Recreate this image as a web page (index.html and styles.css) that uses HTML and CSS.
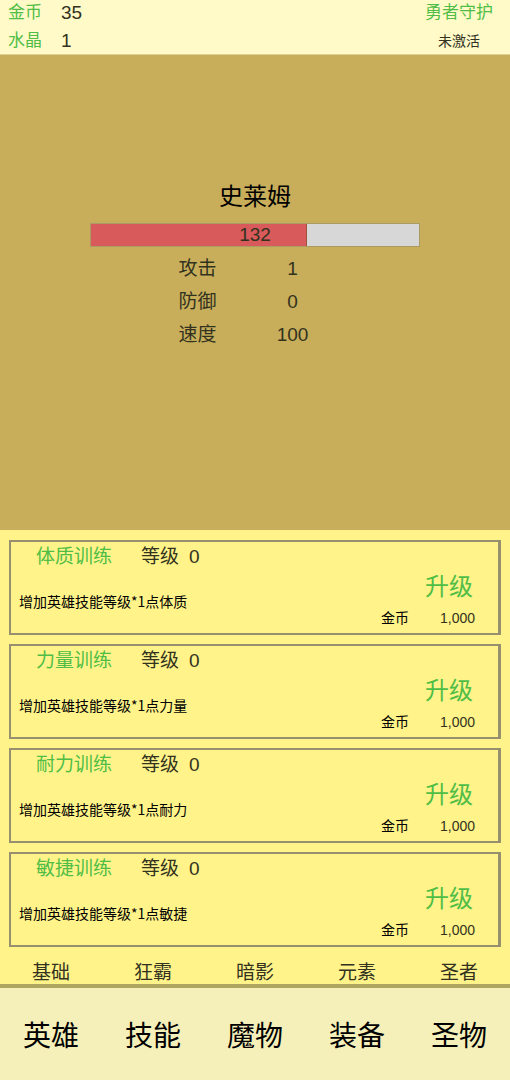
FILE: index.html
```html
<!DOCTYPE html>
<html lang="zh-CN">
<head>
    <meta charset="UTF-8">
    <meta name="viewport" content="width=device-width, initial-scale=1.0">
    <title>勇者守护</title>
    <link rel="stylesheet" href="styles.css">
</head>
<body>

    <!-- 顶部资源 -->
    <header class="topbar">
        <div class="resources">
            <div class="resource"><span class="green">金币</span><span class="number">35</span></div>
            <div class="resource"><span class="green">水晶</span><span class="number">1</span></div>
        </div>
        <div class="guard">
            <div class="green">勇者守护</div>
            <div class="guard-state">未激活</div>
        </div>
    </header>

    <!-- 战斗区域 -->
    <main class="battle">
        <h1>史莱姆</h1>
        <div class="hp">
            <div class="hp-fill" style="width: 66%"></div>
            <span class="hp-text">132</span>
        </div>
        <dl class="stats">
            <dt>攻击</dt><dd>1</dd>
            <dt>防御</dt><dd>0</dd>
            <dt>速度</dt><dd>100</dd>
        </dl>
    </main>

    <!-- 技能列表 -->
    <section class="panel">
        <div class="skill">
            <div class="skill-info">
                <div class="skill-title"><span class="green">体质训练</span><span class="level">等级</span><span>0</span></div>
                <p>增加英雄技能等级*1点体质</p>
            </div>
            <div class="skill-buy">
                <button type="button">升级</button>
                <div class="cost"><span class="cost-name">金币</span><span>1,000</span></div>
            </div>
        </div>
        <div class="skill">
            <div class="skill-info">
                <div class="skill-title"><span class="green">力量训练</span><span class="level">等级</span><span>0</span></div>
                <p>增加英雄技能等级*1点力量</p>
            </div>
            <div class="skill-buy">
                <button type="button">升级</button>
                <div class="cost"><span class="cost-name">金币</span><span>1,000</span></div>
            </div>
        </div>
        <div class="skill">
            <div class="skill-info">
                <div class="skill-title"><span class="green">耐力训练</span><span class="level">等级</span><span>0</span></div>
                <p>增加英雄技能等级*1点耐力</p>
            </div>
            <div class="skill-buy">
                <button type="button">升级</button>
                <div class="cost"><span class="cost-name">金币</span><span>1,000</span></div>
            </div>
        </div>
        <div class="skill">
            <div class="skill-info">
                <div class="skill-title"><span class="green">敏捷训练</span><span class="level">等级</span><span>0</span></div>
                <p>增加英雄技能等级*1点敏捷</p>
            </div>
            <div class="skill-buy">
                <button type="button">升级</button>
                <div class="cost"><span class="cost-name">金币</span><span>1,000</span></div>
            </div>
        </div>
    </section>

    <!-- 技能分类 -->
    <div class="tabs">
        <button type="button">基础</button>
        <button type="button">狂霸</button>
        <button type="button">暗影</button>
        <button type="button">元素</button>
        <button type="button">圣者</button>
    </div>

    <!-- 底部菜单 -->
    <nav class="menu">
        <button type="button">英雄</button>
        <button type="button">技能</button>
        <button type="button">魔物</button>
        <button type="button">装备</button>
        <button type="button">圣物</button>
    </nav>

</body>
</html>
```
FILE: styles.css
```css
* {
    box-sizing: border-box;
}
body {
    display: flex;
    flex-direction: column;
    min-height: 100vh;
    margin: 0;
    background-color: #fff389;
    color: #32321e;
    font-family: "Liberation Sans", "Noto Sans CJK SC", sans-serif;
    font-size: 19px;
}
button {
    padding: 0;
    border: none;
    background: none;
    color: inherit;
    font-family: inherit;
    cursor: pointer;
}
.green {
    color: #50be46;
}
.topbar {
    display: flex;
    align-items: center;
    justify-content: space-between;
    height: 55px;
    padding: 0 17px 0 8px;
    background-color: #fffac8;
    border-bottom: 1px solid #dcd296;
    line-height: 28px;
}
.resource {
    display: flex;
}
.resource .green,
.guard .green {
    font-size: 17px;
}
.number {
    margin-left: 19px;
}
.guard {
    text-align: center;
}
.guard-state {
    font-size: 14px;
}
.battle {
    flex: 1;
    display: flex;
    flex-direction: column;
    align-items: center;
    padding: 124px 20px;
    background-color: #c8ae5a;
}
.battle h1 {
    margin: 0 0 8px;
    color: #000;
    font-size: 24px;
    font-weight: normal;
    line-height: 36px;
}
.hp {
    position: relative;
    width: 100%;
    max-width: 330px;
    height: 24px;
    background-color: #d7d7d7;
    border: 1px solid #aa9b64;
}
.hp-fill {
    height: 100%;
    background-color: #d85a5a;
    border-right: 1px solid #a0503c;
}
.hp-text {
    position: absolute;
    inset: 0;
    text-align: center;
    line-height: 22px;
}
.stats {
    display: grid;
    grid-template-columns: 95px 95px;
    width: 100%;
    max-width: 330px;
    margin: 5px 0 0;
    padding-left: 60px;
    text-align: center;
    line-height: 33px;
}
.stats dd {
    margin: 0;
}
.panel {
    display: flex;
    flex-direction: column;
    gap: 9px;
    padding: 10px 9px 9px;
}
.skill {
    display: flex;
    justify-content: space-between;
    border: 2px solid #96906e;
    border-width: 2px 3px 2px 2px;
    line-height: 30px;
}
.skill-title {
    display: flex;
    padding-left: 25px;
}
.level {
    margin: 0 10px 0 29px;
}
.skill p {
    margin: 14px 0 0 8px;
    color: #000;
    font-family: "Noto Sans CJK SC", sans-serif;
    font-size: 14px;
}
.skill-buy {
    display: flex;
    flex-direction: column;
    align-items: flex-end;
    padding: 30px 23px 0 0;
}
.skill-buy button {
    padding: 0 2px;
    color: #50be46;
    font-size: 24px;
    line-height: 30px;
}
.cost {
    display: flex;
    gap: 31px;
    margin-top: 1px;
    font-size: 14px;
}
.cost-name {
    color: #000;
}
.tabs,
.menu {
    display: grid;
    grid-template-columns: repeat(5, 1fr);
}
.tabs {
    padding-top: 6px;
}
.tabs button {
    font-size: 19px;
    line-height: 22px;
}
.menu {
    padding: 26px 0 20px;
    background-color: #f5f0ba;
    border-top: 4px solid #afa55f;
}
.menu button {
    color: #000;
    font-size: 28px;
    line-height: 46px;
}
```
